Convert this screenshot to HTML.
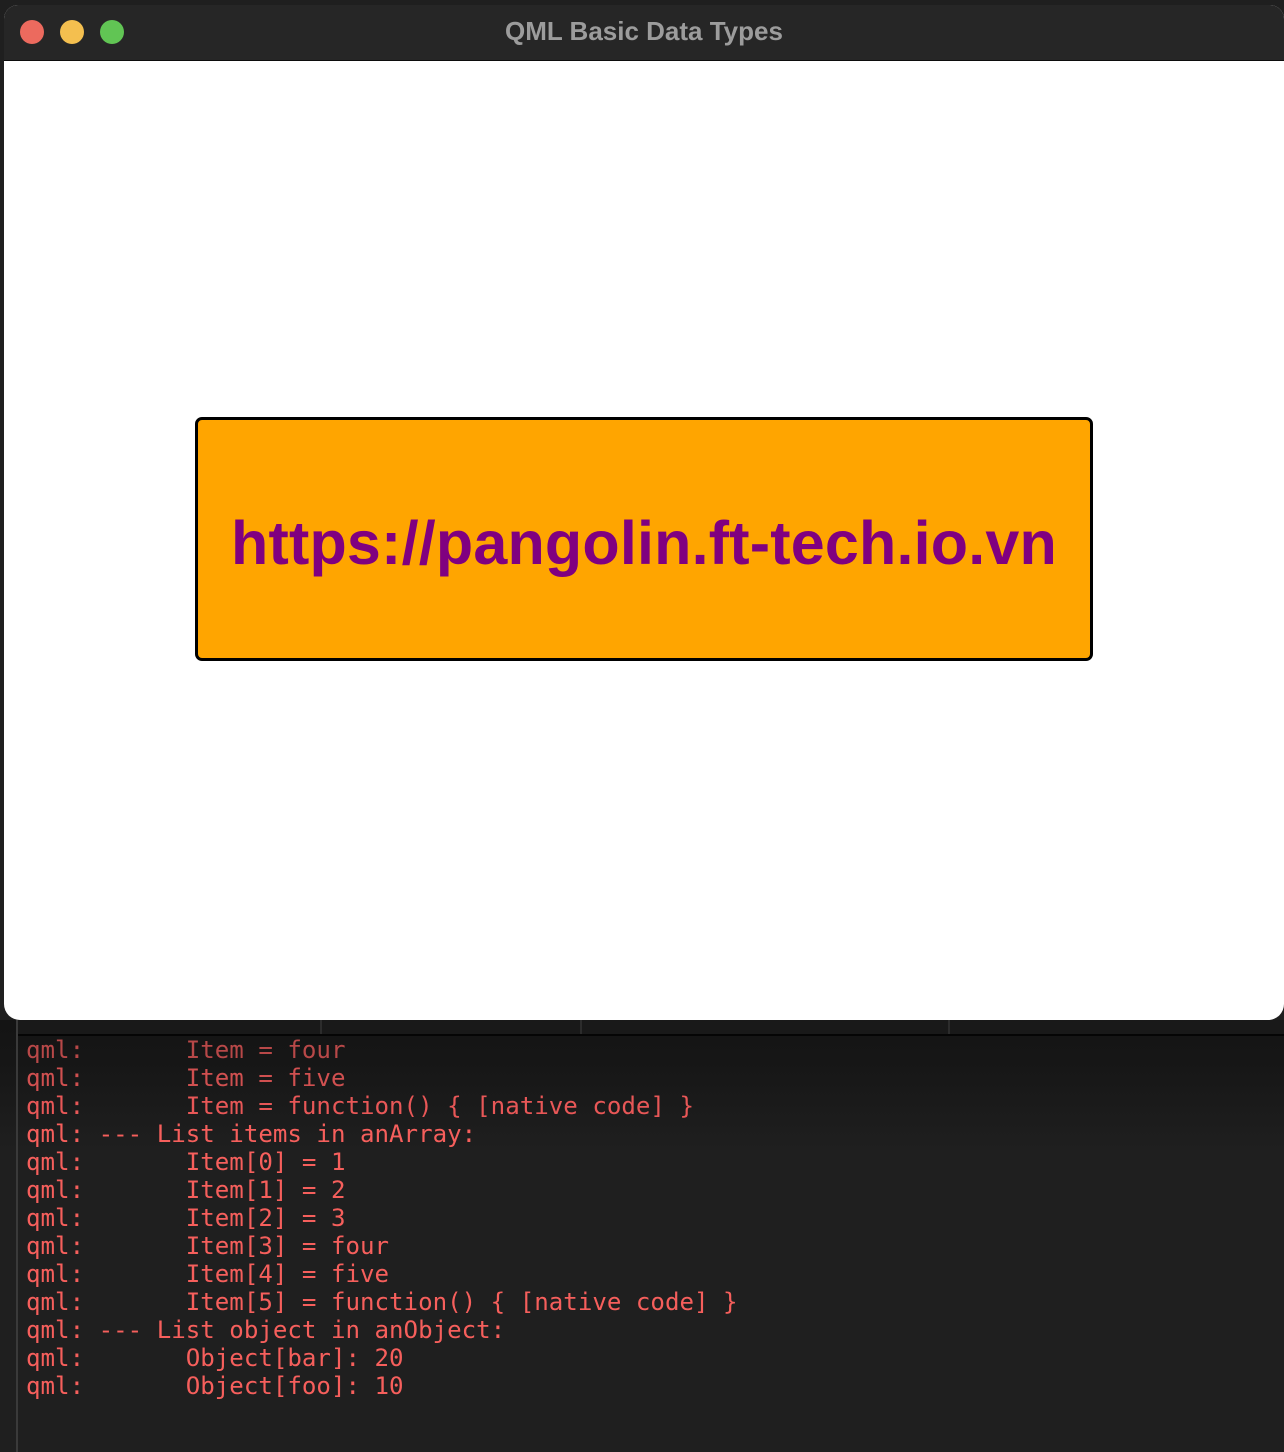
<!DOCTYPE html>
<html><head><meta charset="utf-8"><style>
*{margin:0;padding:0;box-sizing:border-box}
html,body{width:1284px;height:1452px;overflow:hidden;background:#1f1f1f}
#term{position:absolute;left:0;top:1020px;width:1284px;height:432px;background:linear-gradient(#141414 0,#161616 40px,#1f1f1f 130px,#1f1f1f 100%)}
#gut{position:absolute;left:16px;top:1020px;width:2px;height:432px;background:#3a3a3a}
#tabs{position:absolute;left:18px;top:1020px;width:1266px;height:14px;background:#191919}
.tdiv{position:absolute;top:1020px;width:2px;height:14px;background:#2c2c2c}
#tline{position:absolute;left:18px;top:1034px;width:1266px;height:2px;background:#050505}
#lines{position:absolute;left:26px;top:1036px;font-family:"DejaVu Sans Mono","Liberation Mono",monospace;font-size:24px;line-height:28px;color:#f65f5c;white-space:pre;transform:scaleX(1.005);transform-origin:left}
#win{position:absolute;left:4px;top:5px;width:1280px;height:1015px;border-radius:14px 14px 16px 16px;overflow:hidden;background:#fff}
#bar{height:56px;background:#262626;border-bottom:1px solid #0c0c0c;position:relative}
.dot{position:absolute;top:15px;width:24px;height:24px;border-radius:50%}
#title{position:absolute;left:0;right:0;top:11px;text-align:center;font:bold 26px "Liberation Sans",sans-serif;color:#9c9c9c}
#box{position:absolute;left:191px;top:412px;width:898px;height:244px;background:#ffa500;border:3px solid #000;border-radius:7px;text-align:center;font:bold 61px/246px "Liberation Sans",sans-serif;color:#800080;letter-spacing:0.2px}
</style></head><body>
<div id="term"></div>
<div id="tabs"></div>
<div class="tdiv" style="left:320px"></div>
<div class="tdiv" style="left:580px"></div>
<div class="tdiv" style="left:948px"></div>
<div id="tline"></div>
<div id="gut"></div>
<div id="lines"><span style="color:#b84848">qml:       Item = four</span>
<span style="color:#d05050">qml:       Item = five</span>
<span style="color:#e85757">qml:       Item = function() { [native code] }</span>
qml: --- List items in anArray:
qml:       Item[0] = 1
qml:       Item[1] = 2
qml:       Item[2] = 3
qml:       Item[3] = four
qml:       Item[4] = five
qml:       Item[5] = function() { [native code] }
qml: --- List object in anObject:
qml:       Object[bar]: 20
qml:       Object[foo]: 10</div>
<div id="win">
<div id="bar">
<div class="dot" style="left:16px;background:#ec6a5e"></div>
<div class="dot" style="left:56px;background:#f4bf4f"></div>
<div class="dot" style="left:96px;background:#61c554"></div>
<div id="title">QML Basic Data Types</div>
</div>
<div id="box">https://pangolin.ft-tech.io.vn</div>
</div>
</body></html>
